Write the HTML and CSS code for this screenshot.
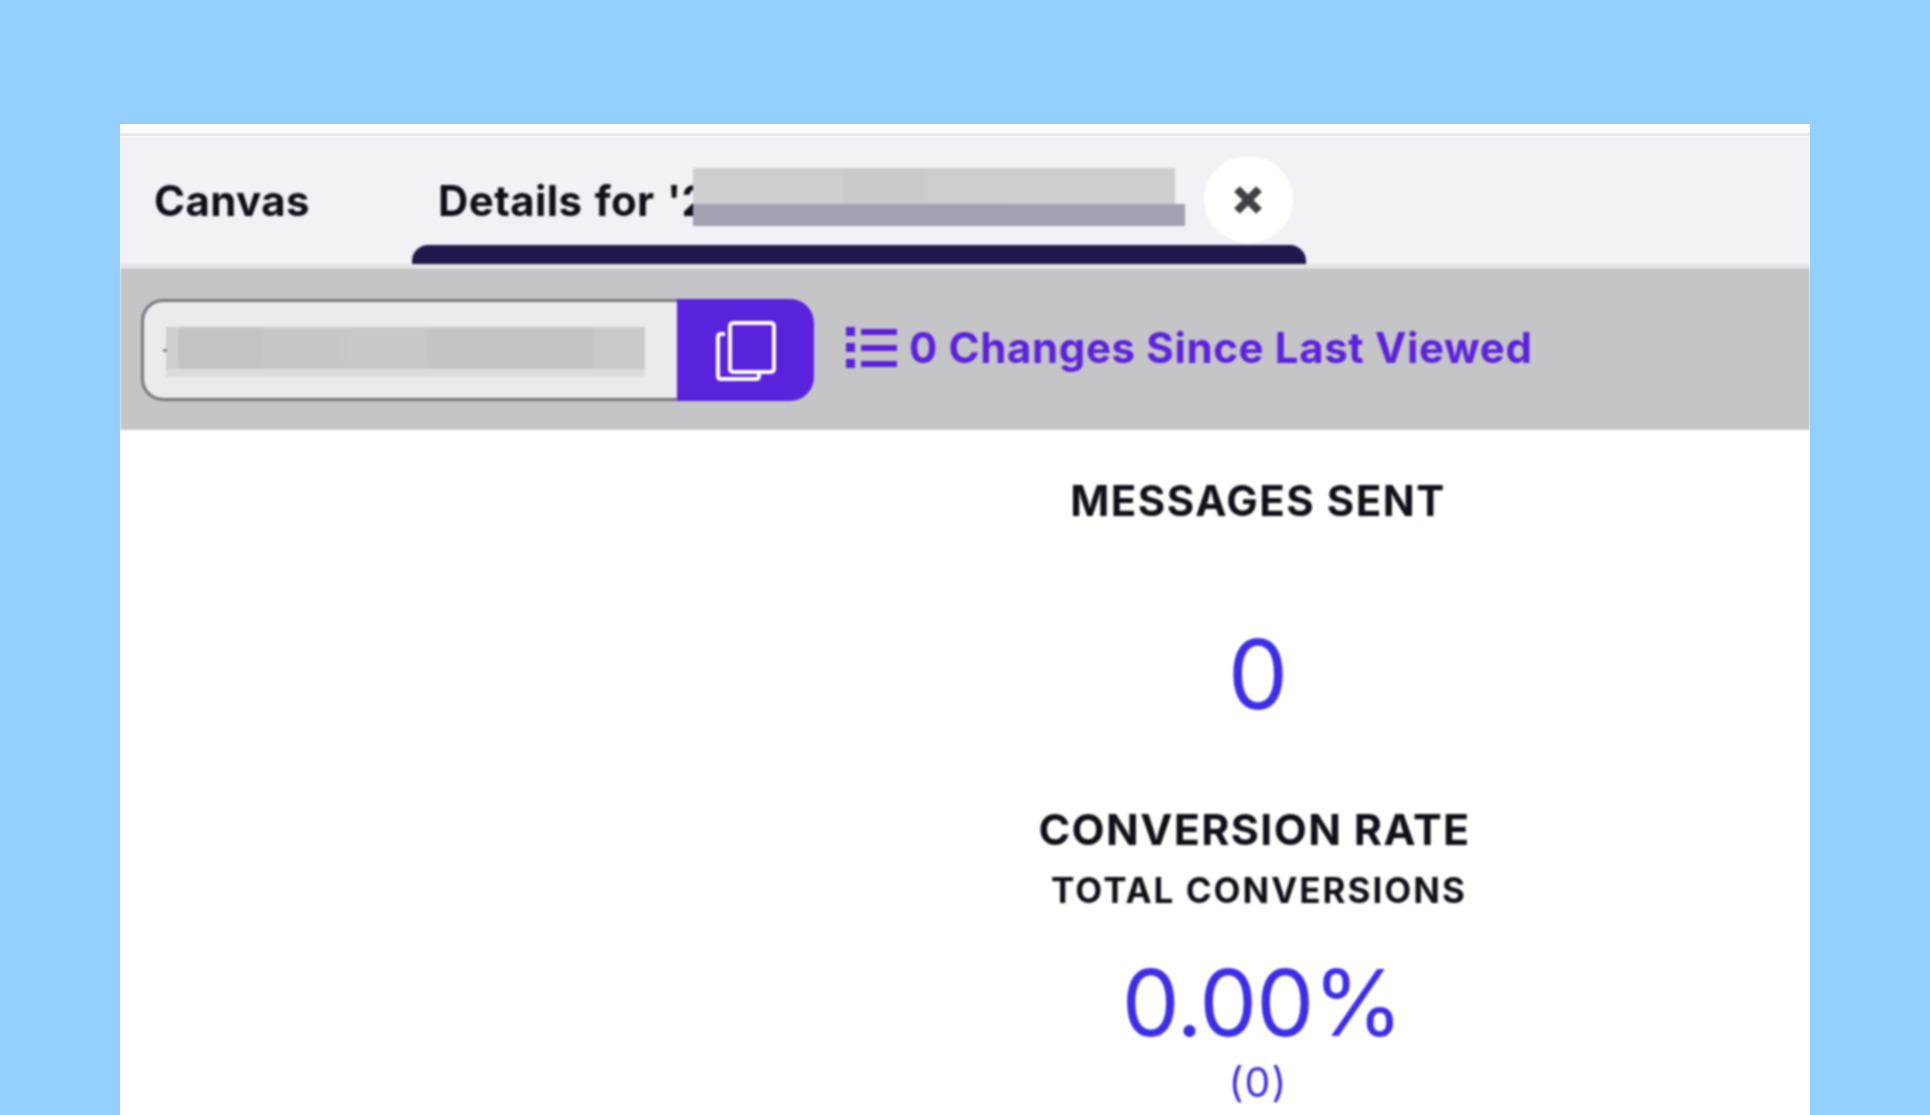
FILE: index.html
```html
<!DOCTYPE html>
<html lang="en">
<head>
<meta charset="utf-8">
<title>Canvas details</title>
<link rel="stylesheet" href="styles.css">
</head>
<body>
<main class="panel">
  <div class="top-strip"></div>
  <nav class="tabs">
    <div class="tab tab-canvas">Canvas</div>
    <div class="tab tab-details">
      <span class="tab-label">Details for '2</span>
      <span class="redact-title"></span>
      <span class="redact-title-low"></span>
      <button class="close" aria-label="Close">
        <svg class="close-icon" viewBox="0 0 32 32" width="32" height="32"><path d="M5 5 27 27M27 5 5 27" fill="none" stroke="#3f3f46" stroke-width="8"/></svg>
      </button>
    </div>
  </nav>
  <div class="toolbar">
    <div class="id-field">
      <div class="id-input"><span class="redact-id"></span></div>
      <button class="copy" aria-label="Copy">
        <svg class="copy-icon" viewBox="0 0 60 60" width="60" height="60" fill="none" stroke="#fff" stroke-width="4">
          <path d="M9 13H5Q2 13 2 16V55Q2 58 5 58H40Q43 58 43 55V52"/>
          <rect x="14" y="2" width="44" height="49" rx="3"/>
        </svg>
      </button>
    </div>
    <div class="changes">
      <svg class="list-icon" viewBox="0 0 51 41" width="51" height="41" fill="#5a22dc">
        <rect x="0" y="0" width="9" height="9"/><rect x="15" y="2" width="36" height="6"/>
        <rect x="0" y="16" width="9" height="9"/><rect x="15" y="18" width="36" height="6"/>
        <rect x="0" y="32" width="9" height="9"/><rect x="15" y="34" width="36" height="6"/>
      </svg>
      <span>0 Changes Since Last Viewed</span>
    </div>
  </div>
  <section class="body">
    <div class="left-col"></div>
    <div class="stats">
      <h2 class="stat-title">MESSAGES SENT</h2>
      <div class="stat-value stat-first">0</div>
      <h2 class="stat-title stat-conv">CONVERSION RATE</h2>
      <h3 class="stat-sub">TOTAL CONVERSIONS</h3>
      <div class="stat-value stat-rate">0.00%</div>
      <div class="stat-count">(0)</div>
    </div>
  </section>
</main>
</body>
</html>
```
FILE: styles.css
```css
* { box-sizing: border-box; }
html, body { margin: 0; height: 100%; }
body {
  height: 1115px;
  overflow: hidden;
  background: #94d0ff;
  padding: 124px 120px 0;
  font-family: Inter, "Noto Sans", sans-serif;
  color: #101018;
}
.panel {
  height: 991px;
  background: #fff;
  display: flex;
  flex-direction: column;
  overflow: hidden;
}
.top-strip { height: 12px; border-bottom: 3px solid #e6e6e8; }
.tabs {
  height: 132px;
  display: flex;
  background: #f1f1f6;
  border-bottom: 4px solid #e4e4e6;
  padding-left: 34px;
  font-size: 42px;
  font-weight: 700;
  letter-spacing: 0.4px;
  word-spacing: 2px;
  filter: blur(0.9px);
}
.tab { display: flex; align-items: center; height: 128px; }
.tab-canvas { width: 258px; }
.tab-details {
  position: relative;
  width: 894px;
  padding-left: 26px;
}
.tab-details::after {
  content: "";
  position: absolute;
  left: 0;
  right: 0;
  bottom: 0;
  height: 19px;
  background: #21194d;
  border-radius: 16px 16px 0 0;
}
.redact-title {
  position: absolute;
  left: 281px;
  top: 32px;
  width: 482px;
  height: 36px;
  background: linear-gradient(90deg, #cecdd2 0 150px, #cbcacf 150px 233px, #cdccd1 233px 316px, #cecdd2 316px);
}
.redact-title-low {
  position: absolute;
  left: 281px;
  top: 68px;
  width: 492px;
  height: 22px;
  background: #a4a1b2;
}
.close {
  position: absolute;
  left: 792px;
  top: 20px;
  width: 89px;
  height: 87px;
  padding: 0;
  border: 0;
  border-radius: 50%;
  background: #fff;
  display: flex;
  align-items: center;
  justify-content: center;
}
.close-icon { margin-right: 2px; }
.toolbar {
  height: 162px;
  flex: none;
  background: #c5c5c7;
  display: flex;
  align-items: center;
  padding: 0 0 0 21px;
  filter: blur(0.8px);
}
.id-field { display: flex; width: 673px; height: 102px; margin-top: 1px; }
.id-input {
  position: relative;
  flex: 1;
  background: #ebebeb;
  border: 3px solid #77777f;
  border-right: 0;
  border-radius: 22px 0 0 22px;
  padding: 25px 0 0 22px;
}
.id-input::before {
  content: "";
  position: absolute;
  left: 19px;
  top: 47px;
  width: 4px;
  height: 3px;
  background: #8a8a8e;
}
.redact-id {
  display: block;
  width: 479px;
  height: 50px;
  background:
    linear-gradient(90deg, #cfcfd1 0 12px, #c2c3c5 12px 95px, #c6c7c9 95px 178px, #c8c9cb 178px 261px, #c3c4c6 261px 428px, #c9cacc 428px) top / 100% 42px no-repeat,
    #dcdcdc;
}
.copy {
  width: 137px;
  border: 0;
  padding: 0;
  background: #5a22dc;
  border-radius: 0 24px 24px 0;
  display: flex;
  align-items: center;
  justify-content: center;
}
.copy-icon { margin-top: 2px; }
.changes {
  display: flex;
  align-items: center;
  margin-left: 32px;
  margin-top: -3px;
  color: #5a22dc;
  font-size: 42px;
  font-weight: 700;
  letter-spacing: 0.63px;
}
.list-icon { margin-right: 12px; flex: none; }
.body { flex: 1; display: grid; grid-template-columns: 586px 1fr; }
.stats { text-align: center; display: flex; flex-direction: column; align-items: center; filter: blur(0.8px); }
.stat-title { margin: 46px 0 0; font-size: 42px; line-height: 50px; font-weight: 700; letter-spacing: 1.5px; }
.stat-value { color: #3d2ee6; font-weight: 400; }
.stat-first { font-size: 96px; line-height: 116px; margin-top: 90px; }
.stat-conv { margin-top: 72px; margin-left: -7px; font-size: 43px; letter-spacing: 1.35px; }
.stat-sub { margin: 13px 0 0 2px; font-size: 35px; line-height: 46px; font-weight: 700; letter-spacing: 2px; }
.stat-rate { font-size: 92px; line-height: 112px; margin: 34px 0 0 8px; letter-spacing: -1.2px; }
.stat-count { color: #3d2ee6; font-size: 41px; line-height: 46px; margin-top: 0; letter-spacing: 1px; }
```
